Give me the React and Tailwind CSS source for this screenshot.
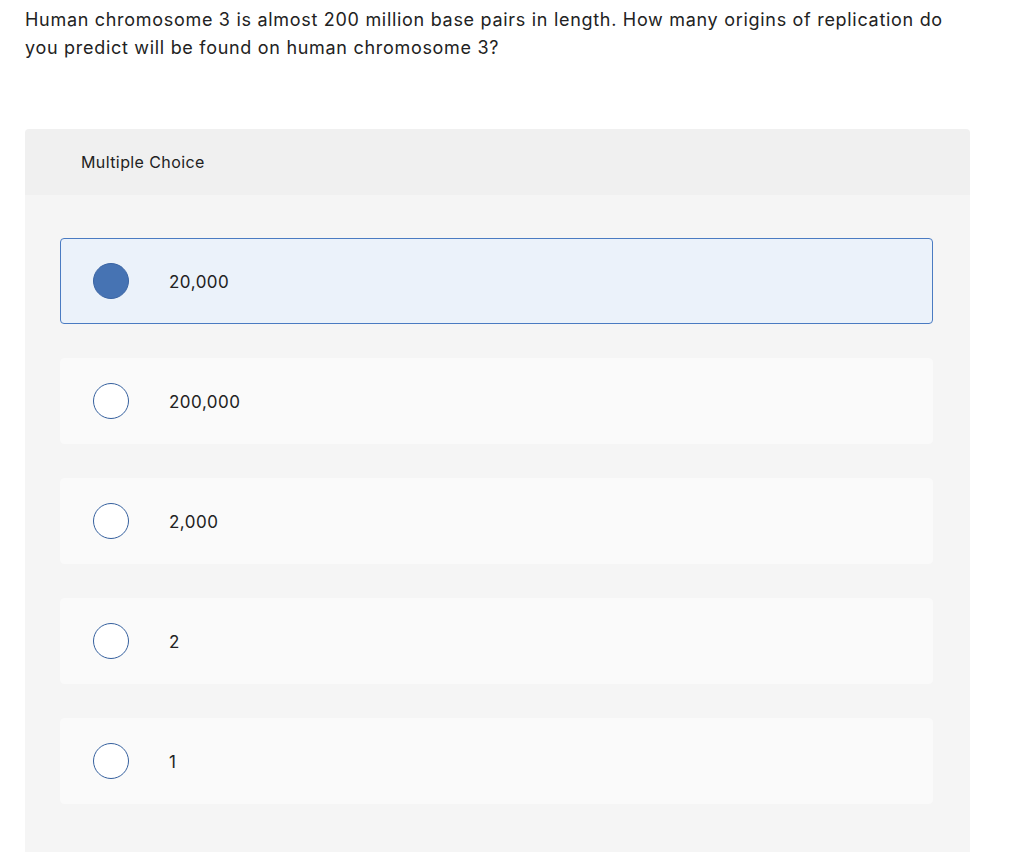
import React from "react";

const options = [
  { label: "20,000", selected: true },
  { label: "200,000" },
  { label: "2,000" },
  { label: "2" },
  { label: "1" },
];

export default function App() {
  return (
    <div
      className="min-h-[852px] bg-white text-[#1a1a1a]"
      style={{ fontFamily: 'Inter, "Open Sans", "Liberation Sans", sans-serif' }}
    >
      <div className="pl-[25px] pr-[50px] pt-[6px] text-[18px] leading-[28px] tracking-[0.7px] text-[#222]">
        Human chromosome 3 is almost 200 million base pairs in length. How many origins of replication do
        you predict will be found on human chromosome 3?
      </div>
      <div className="ml-[25px] mt-[67px] w-[945px] rounded-t-[4px] overflow-hidden">
        <div className="h-[66px] bg-[#f0f0f0] flex items-center pl-[56px] text-[16px] tracking-[0.4px] text-[#222]">
          Multiple Choice
        </div>
        <div className="bg-[#f5f5f5] pl-[35px] pr-[37px] pt-[43px] pb-[60px] flex flex-col gap-[34px]">
          {options.map((o) => (
            <div
              key={o.label}
              className={
                o.selected
                  ? "h-[86px] rounded-[4px] border border-[#4a7bc2] bg-[#ebf2fa] flex items-center pl-[32px]"
                  : "h-[86px] rounded-[4px] border border-[#fafafa] bg-[#fafafa] flex items-center pl-[32px]"
              }
            >
              <div
                className={
                  o.selected
                    ? "w-[36px] h-[36px] shrink-0 rounded-full bg-[#4673b3] border border-[#3a64a3]"
                    : "w-[36px] h-[36px] shrink-0 rounded-full bg-white border-[1.5px] border-[#35609e]"
                }
              />
              <span className="ml-[40px] pt-[3px] text-[17px] tracking-[0.5px] text-[#222]">{o.label}</span>
            </div>
          ))}
        </div>
      </div>
    </div>
  );
}
